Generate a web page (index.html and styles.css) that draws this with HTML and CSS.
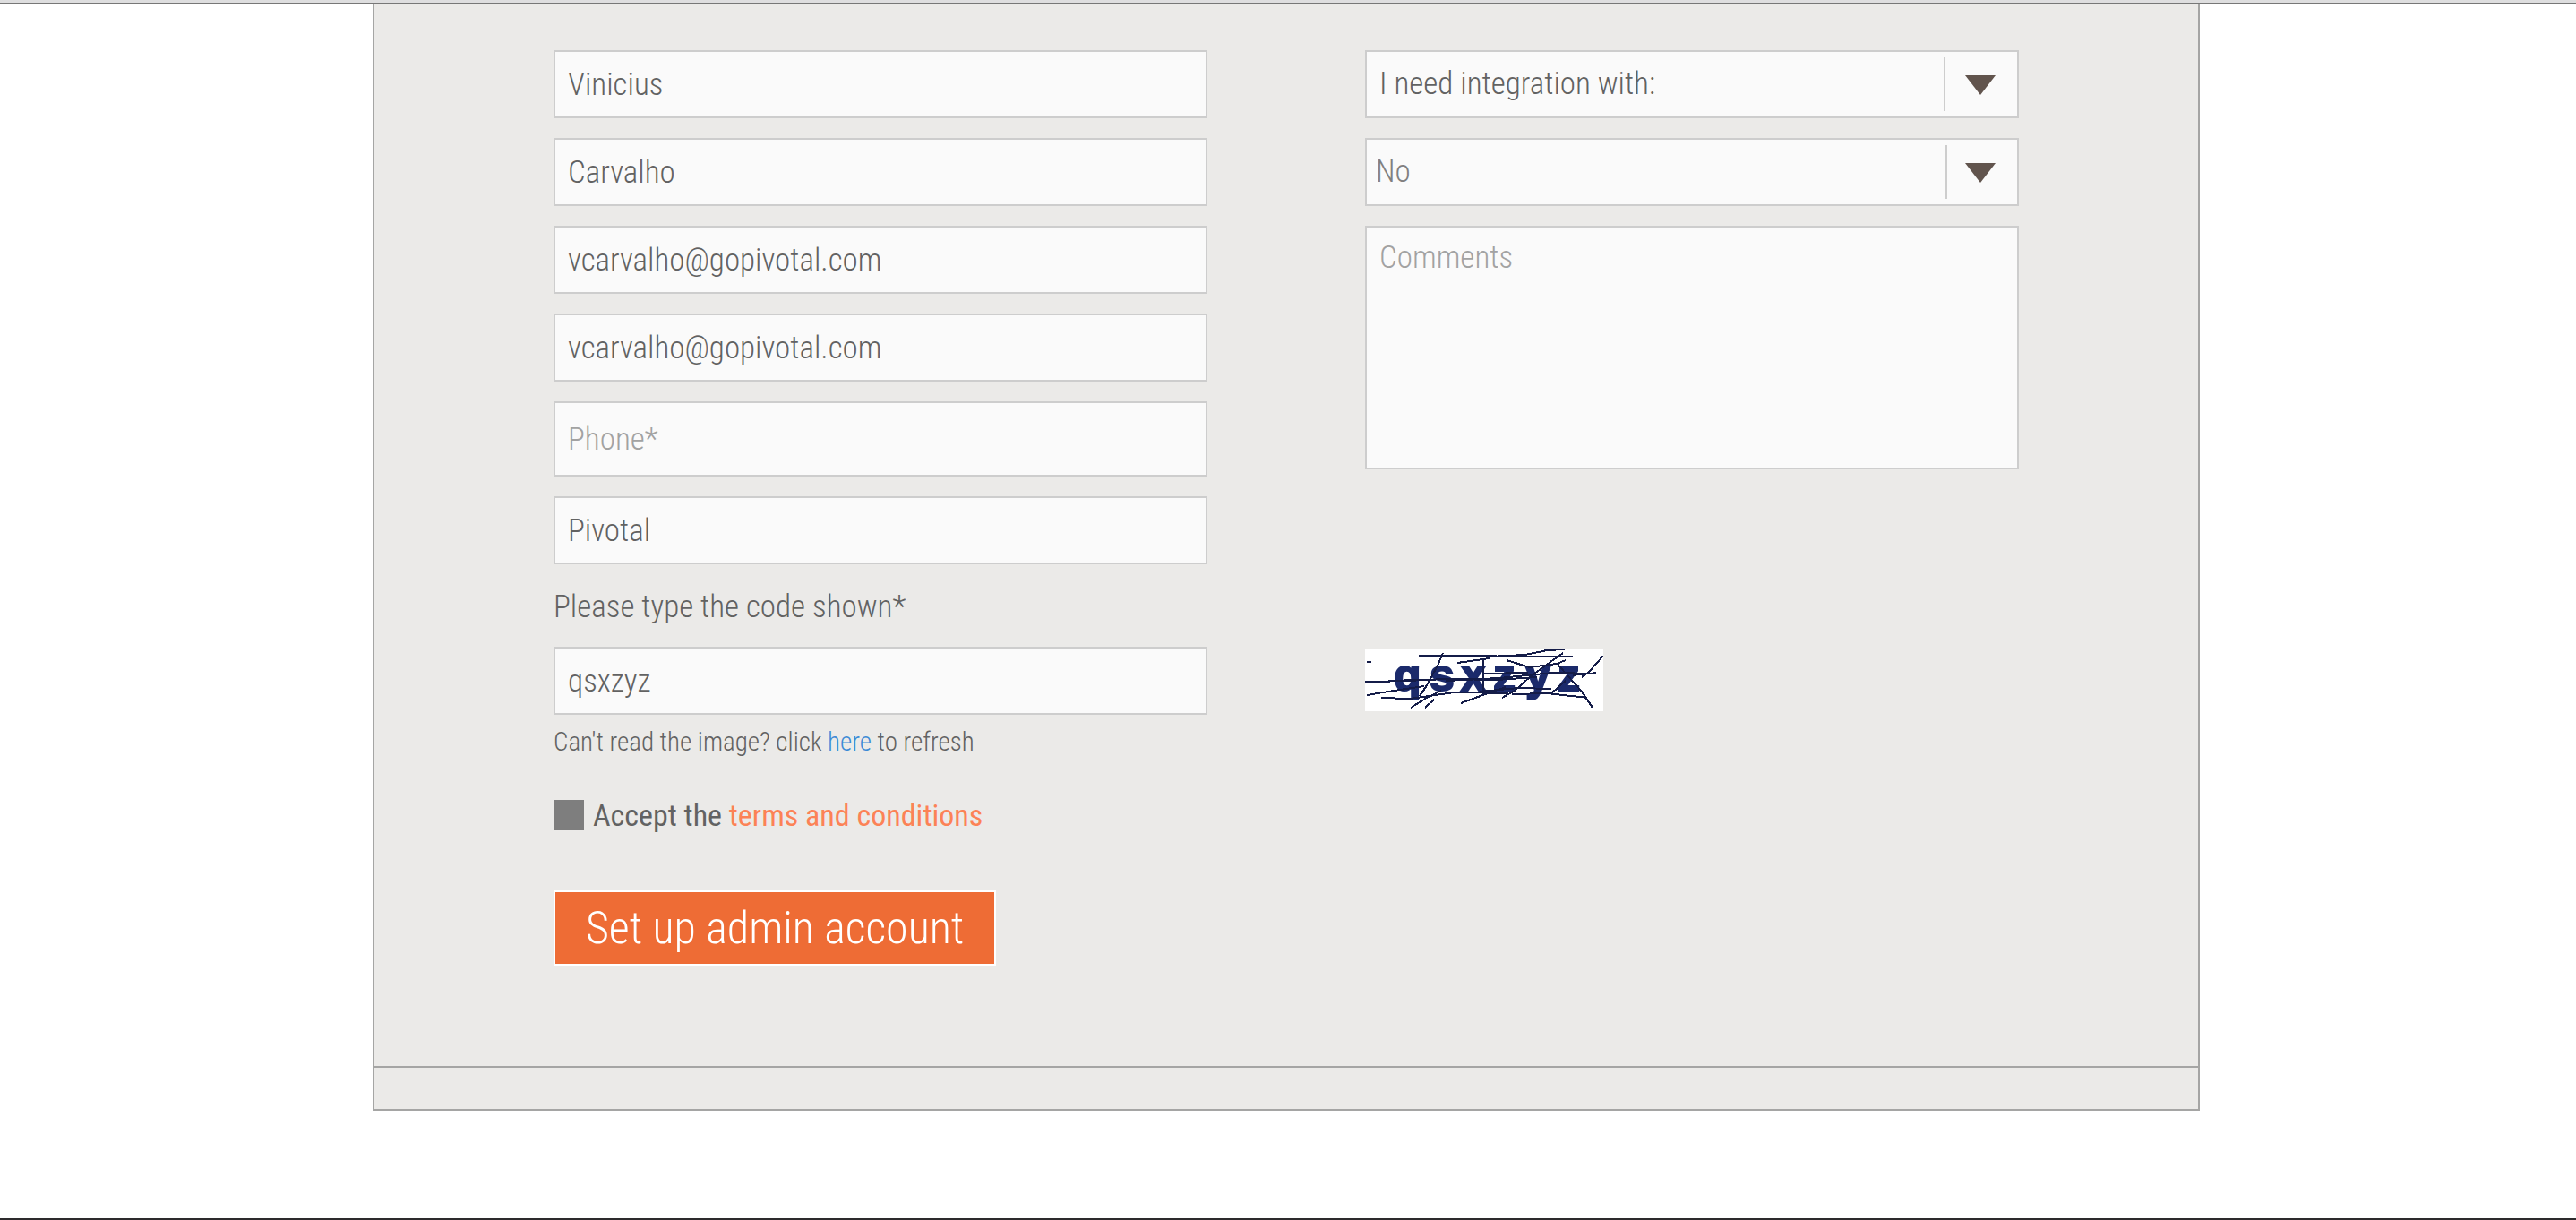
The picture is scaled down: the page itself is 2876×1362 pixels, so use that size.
FILE: index.html
```html
<!DOCTYPE html>
<html lang="en">
<head>
<meta charset="utf-8">
<title>Set up admin account</title>
<link rel="stylesheet" href="styles.css">
</head>
<body>
<header class="topbar"></header>
<main class="page">
  <div class="panel">
    <form class="form">
      <div class="column">
        <input class="field" type="text" aria-label="First name" value="Vinicius">
        <input class="field" type="text" aria-label="Last name" value="Carvalho">
        <input class="field" type="email" aria-label="Email" value="vcarvalho@gopivotal.com">
        <input class="field" type="email" aria-label="Confirm email" value="vcarvalho@gopivotal.com">
        <input class="field field-tall" type="tel" aria-label="Phone" placeholder="Phone*">
        <input class="field" type="text" aria-label="Company" value="Pivotal">
      </div>
      <div class="column">
        <div class="select-box">
          <select class="field" aria-label="Integration"><option>I need integration with:</option></select>
          <svg class="arrow" viewBox="0 0 84 60" aria-hidden="true"><path fill="#cdcdcd" d="M0 0h2v60H0z"/><path fill="#61544d" d="M24 20h34L41 42z"/></svg>
        </div>
        <div class="select-box">
          <select class="field field-muted" aria-label="Answer"><option>No</option></select>
          <svg class="arrow" viewBox="0 0 84 60" aria-hidden="true"><path fill="#cdcdcd" d="M2 0h2v60H2z"/><path fill="#61544d" d="M24 20h34L41 42z"/></svg>
        </div>
        <textarea class="field comments" aria-label="Comments" placeholder="Comments"></textarea>
      </div>
      <div class="code">
        <label class="code-label" for="code">Please type the code shown*</label>
        <input class="field" id="code" type="text" value="qsxzyz">
      </div>
      <svg class="captcha" viewBox="0 0 266 70" role="img" aria-label="Captcha code">
        <path fill="#fff" d="M0 0h266v70H0z"/>
        <text class="captcha-text" y="47" x="32 72 107 143 179 215">qsxzyz</text>
        <g fill="none" stroke="#141c48" stroke-width="2" shape-rendering="crispEdges">
          <path d="M2 15h5M60 8h86v1h86M103 16l36-5M139 9l40-2 24-5 20-1M0 37h27v-1h30M27 36l70-2 50 1 45-3"/>
          <path d="M2 52l24-4 40-6M18 55l32 1 50-7 60 1M90 36l60-3 60-6 48 1M132 28l50-1M132 12v36M128 48l44-4 36 1"/>
          <path d="M87 5l-6 14-12 22-8 12M51 66l18-11 16-8M67 66l10-9M107 61l30-11 20-7"/>
          <path d="M153 55l14-8 18-16 22-16 14-10M158 13l26 8 30-4 10-4M164 51l40-1 44 5M208 50l16-14"/>
          <path d="M266 8L250 26 242 32M232 30l26-3M226 30l16 18 12 18M214 16l10 12"/>
        </g>
      </svg>
      <div class="actions">
        <p class="hint">Can't read the image? click <a class="refresh" href="#">here</a> to refresh</p>
        <div class="terms">
          <input class="checkbox" id="accept" type="checkbox">
          <label for="accept">Accept the <a class="terms-link" href="#">terms and conditions</a></label>
        </div>
        <button class="submit" type="submit">Set up admin account</button>
      </div>
    </form>
    <div class="panel-foot"></div>
  </div>
</main>
<footer class="bottombar"></footer>
</body>
</html>
```
FILE: styles.css
```css
* { box-sizing: border-box; }

body {
  margin: 0;
  min-height: 100vh;
  display: flex;
  flex-direction: column;
  background: #fff;
  color: #626262;
  font: 300 35px/44px "Roboto Condensed", "Liberation Sans Narrow", Lato, sans-serif;
}

.topbar {
  height: 4px;
  background: #dededf;
  border-bottom: 1px solid #777;
}

.page {
  flex: 1;
  display: grid;
  grid-template-columns: 416fr 2040fr 420fr;
  align-items: start;
}

.panel {
  grid-column: 2;
  background: #ebeae8;
  border: 2px solid #a5a5a4;
  border-top: 0;
}

.form {
  display: grid;
  grid-template-columns: 1fr 1fr;
  column-gap: 176px;
  padding: 52px 200px 112px;
}

.column {
  display: flex;
  flex-direction: column;
  gap: 22px;
}

.field {
  display: block;
  width: 100%;
  height: 76px;
  margin: 0;
  padding: 0 14px;
  appearance: none;
  border: 2px solid #cdcdcd;
  border-radius: 0;
  outline: 0;
  background: #fafafa;
  color: #626262;
  font: inherit;
}

.field::placeholder { color: #a2a2a2; opacity: 1; }
.field-tall { height: 84px; }
.field-muted { padding: 0 10px; color: #808080; }

.comments {
  height: 272px;
  padding: 12px 14px;
  resize: none;
}

.select-box { display: grid; align-items: center; }
.select-box > * { grid-area: 1 / 1; }

.arrow {
  width: 84px;
  height: 60px;
  justify-self: end;
  pointer-events: none;
}

.code { padding-top: 26px; }
.code-label { display: block; padding-bottom: 22px; }

.captcha {
  width: 266px;
  height: 70px;
  align-self: end;
  margin-bottom: 4px;
}

.captcha-text {
  fill: #1b2a6b;
  stroke: #1b2a6b;
  stroke-width: 2px;
  font: 700 50px "Liberation Sans", sans-serif;
}

.hint {
  margin: 0;
  padding: 8px 0 38px;
  font-size: 29px;
}

.refresh { color: #3c8ad6; text-decoration: none; }

.terms {
  display: flex;
  align-items: center;
  gap: 10px;
  padding-bottom: 62px;
  font-size: 34px;
  font-weight: 400;
}

.checkbox {
  width: 34px;
  height: 34px;
  margin: 0;
  appearance: none;
  background: #7e7e7e;
}

.terms-link { color: #fc8256; text-decoration: none; }

.submit {
  height: 84px;
  padding: 0 34px;
  border: 2px solid #fff;
  background: #ee6c35;
  color: #fff;
  font: inherit;
  font-size: 50px;
}

.panel-foot {
  height: 48px;
  border-top: 2px solid #a5a5a4;
}

.bottombar { height: 2px; background: #2d2b2d; }
```
